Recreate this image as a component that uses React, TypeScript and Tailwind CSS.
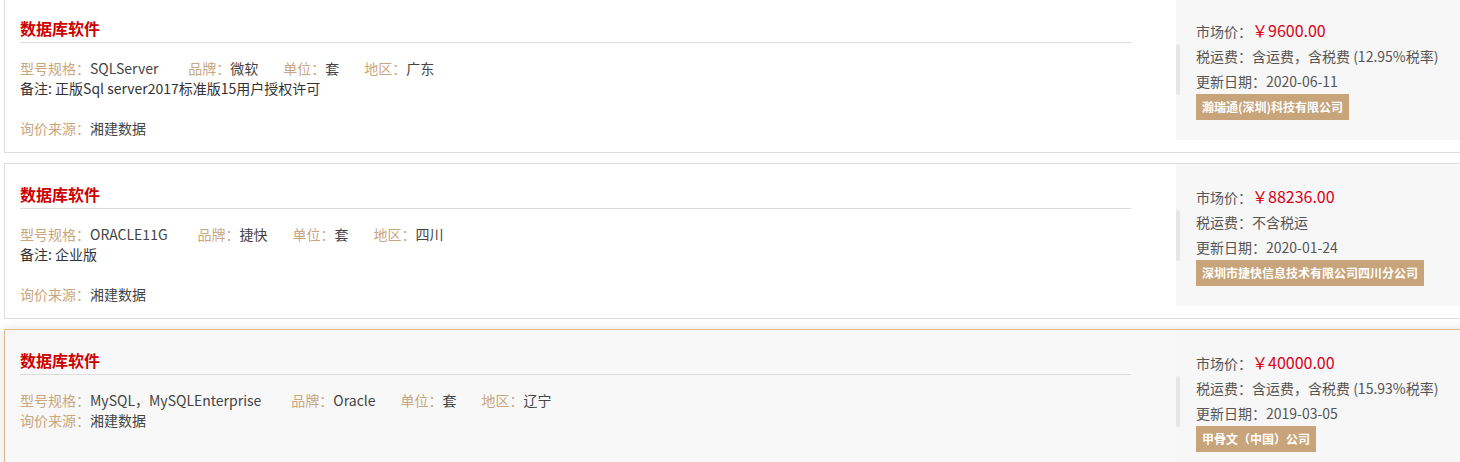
const items = [
  {
    title: '数据库软件',
    model: 'SQLServer',
    brand: '微软',
    unit: '套',
    region: '广东',
    note: '正版Sql server2017标准版15用户授权许可',
    source: '湘建数据',
    price: '￥9600.00',
    tax: '含运费，含税费 (12.95%税率)',
    date: '2020-06-11',
    company: '瀚瑞通(深圳)科技有限公司',
  },
  {
    title: '数据库软件',
    model: 'ORACLE11G',
    brand: '捷快',
    unit: '套',
    region: '四川',
    note: '企业版',
    source: '湘建数据',
    price: '￥88236.00',
    tax: '不含税运',
    date: '2020-01-24',
    company: '深圳市捷快信息技术有限公司四川分公司',
  },
  {
    title: '数据库软件',
    model: 'MySQL，MySQLEnterprise',
    brand: 'Oracle',
    unit: '套',
    region: '辽宁',
    note: '',
    source: '湘建数据',
    price: '￥40000.00',
    tax: '含运费，含税费 (15.93%税率)',
    date: '2019-03-05',
    company: '甲骨文（中国）公司',
    active: true,
  },
];

type Item = (typeof items)[number] & { active?: boolean };

const Card = ({ item }: { item: Item }) => {
  return (
    <div
      className={
        item.active
          ? 'flex items-start w-[1480px] h-[156px] border border-[#dfb88c] bg-[#f8f8f8] shadow-[0_0_10px_rgba(0,0,0,0.12)]'
          : 'flex items-start w-[1480px] h-[156px] border border-[#dddddd] bg-white'
      }
    >
      <div className="w-[1126px] shrink-0 pl-[15px] pt-[18px]">
        <div className="h-[27px] border-b border-[#dcdcdc] text-[16px] leading-[24px] font-bold text-[#cc0000]">
          {item.title}
        </div>
        <div className="mt-[15px] text-[14px] leading-[20px] text-[#444]">
          <div className="flex">
            <span className="mr-[30px]">
              <span className="text-[#c9a67f]">型号规格：</span>
              {item.model}
            </span>
            <span className="mr-[25px]">
              <span className="text-[#c9a67f]">品牌：</span>
              {item.brand}
            </span>
            <span className="mr-[25px]">
              <span className="text-[#c9a67f]">单位：</span>
              {item.unit}
            </span>
            <span>
              <span className="text-[#c9a67f]">地区：</span>
              {item.region}
            </span>
          </div>
          {item.note && (
            <>
              <div className="text-[#333]">备注: {item.note}</div>
              <div className="h-[20px]" />
            </>
          )}
          <div>
            <span className="text-[#c9a67f]">询价来源：</span>
            {item.source}
          </div>
        </div>
      </div>
      <div className="ml-[45px] flex flex-1 items-center bg-[#f7f7f7]">
        <div className="w-[4px] h-[51px] rounded-full bg-[#e6e6e6]" />
        <div className="pl-[16px] py-[20px] text-[14px] leading-[25px] text-[#555]">
          <div>
            市场价：<span className="text-[16px] text-[#d9001b]">{item.price}</span>
          </div>
          <div>税运费：{item.tax}</div>
          <div>更新日期：{item.date}</div>
          <div className="inline-block h-[26px] px-[6px] bg-[#c8a47b] text-[12px] leading-[26px] font-bold text-white">
            {item.company}
          </div>
        </div>
      </div>
    </div>
  );
};

const App = () => {
  return (
    <div className="w-[1460px] h-[462px] overflow-hidden bg-white font-['Noto_Sans_CJK_SC',sans-serif]">
      <div className="-mt-[3px] pl-[4px] flex flex-col gap-[10px]">
        {items.map((item, i) => (
          <Card key={i} item={item} />
        ))}
      </div>
    </div>
  );
};

export default App;
